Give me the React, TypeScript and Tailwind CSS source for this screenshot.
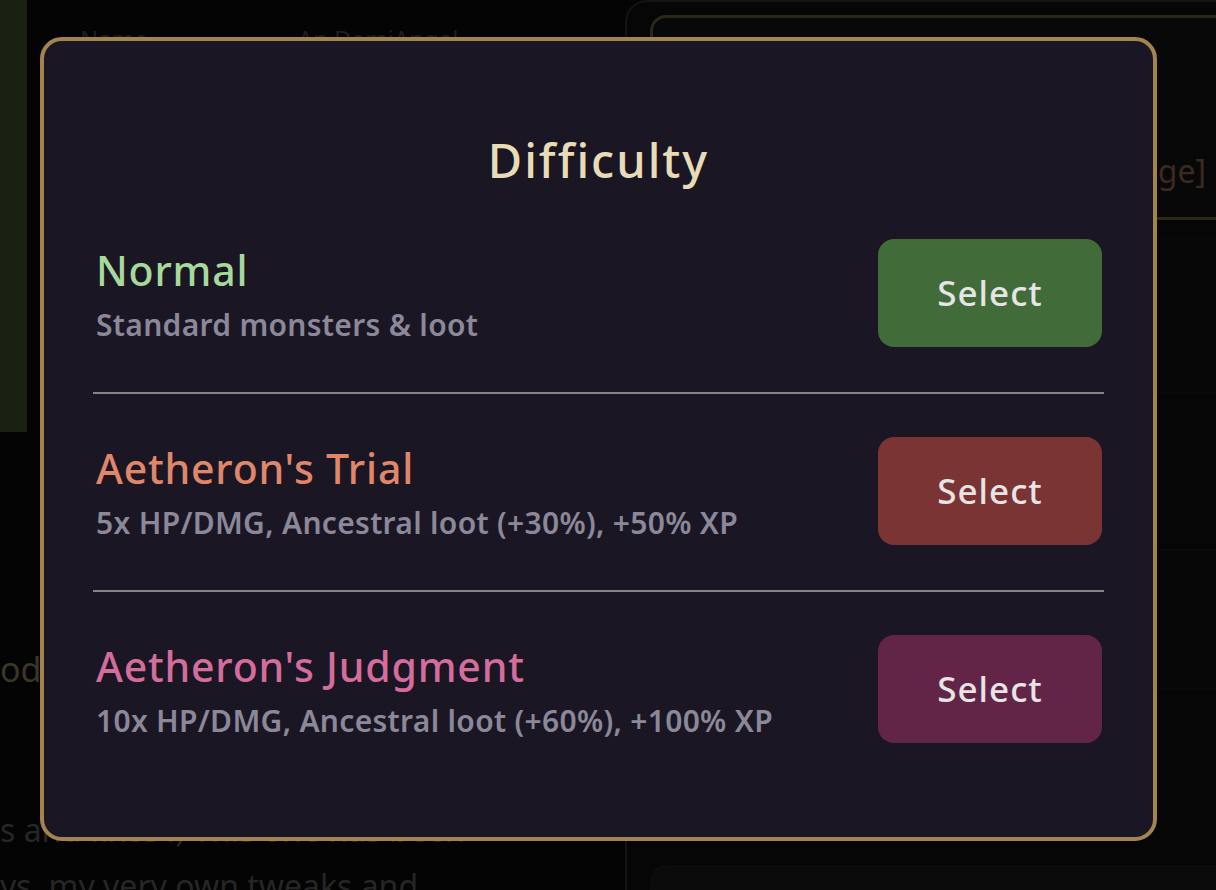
import React from "react";

interface Level {
  name: string;
  desc: string;
  nameColor: string;
  btnColor: string;
}

const LEVELS: Level[] = [
  {
    name: "Normal",
    desc: "Standard monsters & loot",
    nameColor: "text-[#a6d99b]",
    btnColor: "bg-[#426b3a]",
  },
  {
    name: "Aetheron's Trial",
    desc: "5x HP/DMG, Ancestral loot (+30%), +50% XP",
    nameColor: "text-[#e0876a]",
    btnColor: "bg-[#7a3434]",
  },
  {
    name: "Aetheron's Judgment",
    desc: "10x HP/DMG, Ancestral loot (+60%), +100% XP",
    nameColor: "text-[#d46c9c]",
    btnColor: "bg-[#622447]",
  },
];

function BackgroundPage() {
  return (
    <div className="flex h-full w-full">
      {/* left column */}
      <div className="flex w-[625px] shrink-0 flex-col">
        <div className="flex h-[432px] shrink-0">
          <div className="w-[27px] bg-[#1a2112]" />
          <div className="flex gap-[150px] pl-[53px] pt-[27px] text-[24px] leading-none text-[#1f1f1f]">
            <span>Name</span>
            <span>An DemiAngel</span>
          </div>
        </div>
        <div className="mt-[220px] shrink-0 text-[34px] leading-none text-[#3a3727]">od</div>
        <div className="mt-[128px] flex shrink-0 flex-col gap-[24px] whitespace-nowrap text-[32px] leading-none text-[#262626]">
          <span>s and fixes !) This one has been</span>
          <span>ys, my very own tweaks and</span>
        </div>
      </div>

      {/* right column */}
      <div className="flex flex-1 flex-col rounded-tl-[22px] border-l-2 border-t-2 border-[#141414] bg-[#060606] pl-[23px] pt-[13px]">
        <div className="flex h-[205px] shrink-0 items-end justify-end rounded-l-[16px] border-[3px] border-r-0 border-[#2c2816] bg-[#080808] pb-[30px] pr-[10px]">
          <span className="text-[32px] leading-none text-[#3a2a1f]">[Change]</span>
        </div>
        <div className="mt-[16px] flex shrink-0 flex-col">
          <div className="h-[158px] border-b border-[#0b0b0b] bg-[#070707]" />
          <div className="h-[156px] border-b border-[#0b0b0b] bg-[#060606]" />
          <div className="h-[140px] border-b border-[#0b0b0b] bg-[#070707]" />
          <div className="h-[175px] bg-[#060606]" />
        </div>
        <div className="h-[60px] shrink-0 rounded-tl-[16px] bg-[#0b0b0b]" />
      </div>
    </div>
  );
}

export default function App() {
  return (
    <div className="relative h-[890px] w-[1216px] overflow-hidden bg-[#040405] font-['Noto_Sans',sans-serif]">
      <BackgroundPage />

      {/* Difficulty modal */}
      <div className="absolute left-[40px] top-[37px] h-[804px] w-[1117px] rounded-[22px] border-[4px] border-[#a3834f] bg-[#1a1624] px-[49px]">
        <h2 className="pt-[88px] text-center text-[47px] font-medium leading-[1.36] tracking-[2px] text-[#e8dcb7]">
          Difficulty
        </h2>
        <div className="mt-[3px] flex flex-col">
          {LEVELS.map((lvl, i) => (
            <div
              key={lvl.name}
              className={`flex items-center justify-between pb-[45px] pt-[43px] ${
                i < LEVELS.length - 1 ? "border-b-2 border-[#858585]" : ""
              }`}
            >
              <div className="flex flex-col gap-[7px] pl-[3px] pt-[3px]">
                <span className={`text-[41px] font-medium leading-[1.36] tracking-[0.8px] ${lvl.nameColor}`}>
                  {lvl.name}
                </span>
                <span className="text-[30px] font-semibold leading-[1.36] tracking-[0.3px] text-[#8b8899]">
                  {lvl.desc}
                </span>
              </div>
              <button
                className={`mr-[2px] h-[108px] w-[224px] rounded-[16px] text-[35px] font-medium tracking-[1px] text-[#e6e4e4] ${lvl.btnColor}`}
              >
                Select
              </button>
            </div>
          ))}
        </div>
      </div>
    </div>
  );
}
